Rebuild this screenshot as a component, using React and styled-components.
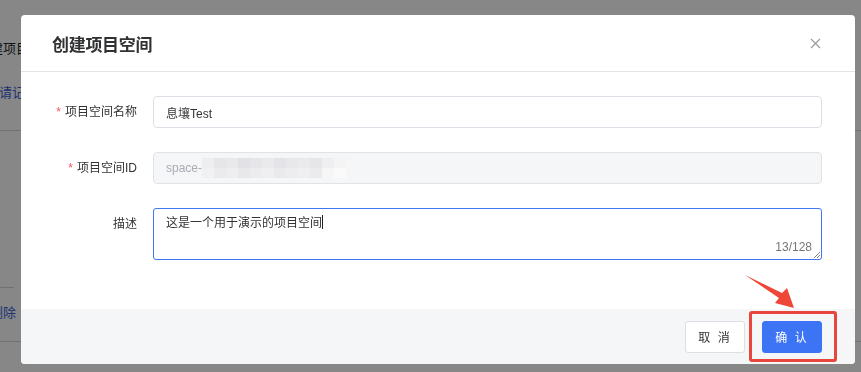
import styled, { createGlobalStyle } from "styled-components";

const GlobalStyle = createGlobalStyle`
  html, body {
    margin: 0;
    padding: 0;
    width: 861px;
    height: 372px;
    overflow: hidden;
    background: #fff;
    font-family: "Liberation Sans", "Noto Sans CJK SC", sans-serif;
  }
  * { box-sizing: border-box; }
`;

const mosaic = [
  ["#eeeef0", "#e6e6e9", "#e9e9ec", "#e2e2e6", "#e6e6e9", "#eaeaed", "#e4e4e8", "#e8e8eb", "#eaeaed", "#e6e6e9", "#efeff1", "#f4f4f5"],
  ["#f1f1f3", "#ebebee", "#eeeef0", "#e8e8eb", "#ececef", "#efeff1", "#eaeaed", "#ededf0", "#efeff1", "#ebebee", "#f6f6f7", "#fafafa"],
];

export default function App() {
  return (
    <>
      <GlobalStyle />
      <Page>
        <PageText $top={40} $shift={-10}>建项目</PageText>
        <PageLink $top={26} $shift={-1}>请记</PageLink>
        <PageRule $top={28} />
        <PageRule $top={156} $short />
        <PageLink $top={16} $shift={-10}>删除</PageLink>
        <PageRule $top={19} />
      </Page>

      <Overlay>
        <Dialog>
          <Header>
            <Title>创建项目空间</Title>
            <Close>
              <svg width="11" height="11" viewBox="0 0 11 11">
                <path d="M1 1 L10 10 M10 1 L1 10" stroke="#9a9a9a" strokeWidth="1.2" fill="none" />
              </svg>
            </Close>
          </Header>

          <Body>
            <Row>
              <Label $required>项目空间名称</Label>
              <Input>息壤Test</Input>
            </Row>
            <Row>
              <Label $required>项目空间ID</Label>
              <Input $disabled>
                space-
                <Mosaic>
                  {mosaic.map((row, i) => (
                    <MosaicRow key={i}>
                      {row.map((c, j) => (
                        <Cell key={j} $shade={c} />
                      ))}
                    </MosaicRow>
                  ))}
                </Mosaic>
              </Input>
            </Row>
            <Row>
              <Label>描述</Label>
              <TextArea>
                这是一个用于演示的项目空间<Caret />
                <Counter>13/128</Counter>
                <Grip>
                  <svg width="7" height="7" viewBox="0 0 7 7">
                    <path d="M1 7 L7 1 M4 7 L7 4" stroke="#777" strokeWidth="0.9" />
                  </svg>
                </Grip>
              </TextArea>
            </Row>
          </Body>

          <Footer>
            <Button>取 消</Button>
            <Button $primary>确 认</Button>
          </Footer>
        </Dialog>

        <Highlight />
        <Arrow width="60" height="40" viewBox="0 0 60 40">
          <polygon points="0,0 37,18 42,13 49,33 30,28 34,23" fill="#ee4637" />
        </Arrow>
      </Overlay>
    </>
  );
}

const Page = styled.div`
  display: flex;
  flex-direction: column;
  width: 861px;
  height: 372px;
`;

const PageText = styled.div`
  margin-top: ${(p) => p.$top}px;
  margin-left: ${(p) => p.$shift}px;
  font-size: 13px;
  line-height: 18px;
  color: #222;
  white-space: nowrap;
`;

const PageLink = styled(PageText)`
  color: #3a5bd9;
`;

const PageRule = styled.div`
  margin-top: ${(p) => p.$top}px;
  width: ${(p) => (p.$short ? "14px" : "100%")};
  height: 1px;
  background: #d6d6d6;
`;

const Overlay = styled.div`
  position: fixed;
  inset: 0;
  background: rgba(0, 0, 0, 0.47);
  padding: 15px 6px 0 21px;
`;

const Dialog = styled.div`
  width: 834px;
  background: #fff;
  border-radius: 4px;
  overflow: hidden;
  display: flex;
  flex-direction: column;
`;

const Header = styled.div`
  height: 57px;
  padding: 0 34px 0 31px;
  display: flex;
  align-items: center;
  justify-content: space-between;
  border-bottom: 1px solid #e4e4e8;
`;

const Title = styled.div`
  font-family: "Noto Sans CJK SC", sans-serif;
  font-size: 17px;
  font-weight: 700;
  color: #303133;
  letter-spacing: -0.3px;
`;

const Close = styled.div`
  display: flex;
  width: 11px;
  height: 11px;
  margin-top: 1px;
`;

const Body = styled.div`
  display: flex;
  flex-direction: column;
  gap: 24px;
  padding: 24px 33px 49px 16px;
`;

const Row = styled.div`
  display: grid;
  grid-template-columns: 100px 1fr;
  column-gap: 16px;
  align-items: start;
`;

const Label = styled.div`
  text-align: right;
  font-size: 12px;
  line-height: 32px;
  color: #333;
  &::before {
    content: "${(p) => (p.$required ? "*" : "")}";
    color: #f2545b;
    margin-right: 4px;
  }
`;

const Input = styled.div`
  height: 32px;
  display: flex;
  align-items: center;
  padding: 0 12px;
  border: 1px solid ${(p) => (p.$disabled ? "#e1e2e6" : "#dcdfe6")};
  border-radius: 4px;
  background: ${(p) => (p.$disabled ? "#f5f6f8" : "#fff")};
  color: ${(p) => (p.$disabled ? "#a8abb2" : "#333")};
  font-size: 12px;
`;

const Mosaic = styled.span`
  display: flex;
  flex-direction: column;
`;

const MosaicRow = styled.span`
  display: flex;
`;

const Cell = styled.span`
  width: 12px;
  height: 10px;
  background: ${(p) => p.$shade};
`;

const TextArea = styled.div`
  position: relative;
  height: 52px;
  padding: 5px 12px;
  border: 1px solid #3f76f3;
  border-radius: 3px;
  font-size: 12px;
  line-height: 18px;
  color: #333;
`;

const Caret = styled.span`
  display: inline-block;
  width: 1px;
  height: 14px;
  background: #222;
  vertical-align: -2px;
`;

const Counter = styled.span`
  position: absolute;
  right: 9px;
  bottom: 5px;
  font-size: 12px;
  line-height: 14px;
  color: #777;
`;

const Grip = styled.span`
  position: absolute;
  right: 1px;
  bottom: 1px;
  display: flex;
`;

const Footer = styled.div`
  height: 55px;
  background: #f5f6f8;
  display: flex;
  align-items: center;
  justify-content: flex-end;
  gap: 17px;
  padding: 0 33px 0 0;
`;

const Button = styled.div`
  width: 60px;
  height: 32px;
  display: flex;
  align-items: center;
  justify-content: center;
  border-radius: 3px;
  font-size: 12px;
  letter-spacing: 2px;
  border: 1px solid ${(p) => (p.$primary ? "#3d74f6" : "#dcdfe6")};
  background: ${(p) => (p.$primary ? "#3d74f6" : "#fff")};
  color: ${(p) => (p.$primary ? "#fff" : "#333")};
`;

const Highlight = styled.div`
  position: absolute;
  left: 749px;
  top: 311px;
  width: 88px;
  height: 51px;
  border: 3px solid #e8453c;
  border-radius: 3px;
`;

const Arrow = styled.svg`
  position: absolute;
  left: 745px;
  top: 275px;
`;
